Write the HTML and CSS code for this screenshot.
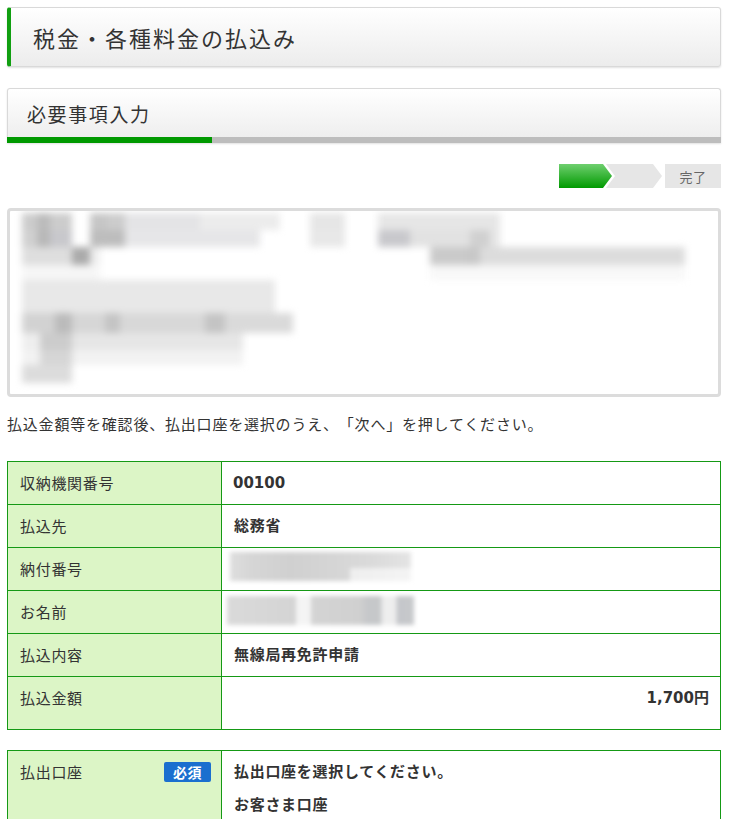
FILE: index.html
```html
<!DOCTYPE html>
<html lang="ja">
<head>
<meta charset="utf-8">
<title>税金・各種料金の払込み</title>
<link rel="stylesheet" href="styles.css">
</head>
<body>
<div class="page">
  <div class="title-box"><h1 class="title">税金・各種料金の払込み</h1></div>

  <div class="sub-box">
    <h2 class="sub-title">必要事項入力</h2>
    <div class="progress"><div class="progress-fill"></div></div>
  </div>

  <div class="steps">
    <svg class="steps-svg" width="106" height="24" viewBox="0 0 106 24">
      <defs>
        <linearGradient id="g" x1="0" y1="0" x2="0" y2="1">
          <stop offset="0" stop-color="#6fcf6f"/>
          <stop offset="1" stop-color="#009a00"/>
        </linearGradient>
      </defs>
      <polygon points="0,0 44,0 53,12 44,24 0,24" fill="url(#g)"/>
      <polygon points="47,0 94,0 103,12 94,24 47,24 56,12" fill="#e6e6e6"/>
    </svg>
    <div class="step-done">完了</div>
  </div>

  <div class="notice">
    <div class="blur">
      <div class="brow h17"><span class="s" style="width:15px;background:#ccc"></span><span class="s" style="width:13px;background:#bbb"></span><span class="s" style="width:22px;background:#ccc"></span><span class="s" style="width:18px"></span><span class="s" style="width:17px;background:#c6c6c6"></span><span class="s" style="width:18px;background:#ccc"></span><span class="s" style="width:75px;background:#e4e4e6"></span><span class="s" style="width:80px;background:#ececec"></span><span class="s" style="width:30px"></span><span class="s" style="width:35px;background:#e6e6e6"></span><span class="s" style="width:33px"></span><span class="s" style="width:122px;background:#e6e6e6"></span></div>
      <div class="brow h17"><span class="s" style="width:15px;background:#d0d0d0"></span><span class="s" style="width:13px;background:#b8b8b8"></span><span class="s" style="width:22px;background:#c8c8cc"></span><span class="s" style="width:18px"></span><span class="s" style="width:35px;background:#bdbdbd"></span><span class="s" style="width:135px;background:#e6e6e8"></span><span class="s" style="width:50px"></span><span class="s" style="width:35px;background:#e8e8e8"></span><span class="s" style="width:33px"></span><span class="s" style="width:32px;background:#c8c8cc"></span><span class="s" style="width:60px;background:#e2e2e2"></span><span class="s" style="width:20px;background:#d0d0d0"></span><span class="s" style="width:10px;background:#e6e6e6"></span></div>
      <div class="brow h18"><span class="s" style="width:50px;background:#dedede"></span><span class="s" style="width:18px;background:#aaa"></span><span class="s" style="width:10px;background:#eee"></span><span class="s" style="width:330px"></span><span class="s" style="width:35px;background:#cacaca"></span><span class="s" style="width:15px;background:#c8c8c8"></span><span class="s" style="width:205px;background:#dcdcdc"></span></div>
      <div class="brow h15"><span class="s" style="width:78px;background:#f6f6f6"></span><span class="s" style="width:330px"></span><span class="s" style="width:255px;background:#f8f8f8"></span></div>
      <div class="brow h33"><span class="s" style="width:253px;background:#e8e8e8"></span></div>
      <div class="brow h20"><span class="s" style="width:33px;background:#d2d2d2"></span><span class="s" style="width:17px;background:#bbb"></span><span class="s" style="width:33px;background:#d6d6d6"></span><span class="s" style="width:15px;background:#c4c4c4"></span><span class="s" style="width:85px;background:#d8d8d8"></span><span class="s" style="width:20px;background:#c4c4c4"></span><span class="s" style="width:68px;background:#dadada"></span></div>
      <div class="brow h17"><span class="s" style="width:18px;background:#eee"></span><span class="s" style="width:32px;background:#ccc"></span><span class="s" style="width:171px;background:#e6e6e6"></span></div>
      <div class="brow h15"><span class="s" style="width:18px;background:#f2f2f2"></span><span class="s" style="width:32px;background:#d6d6d6"></span><span class="s" style="width:171px;background:#f2f2f2"></span></div>
      <div class="brow h18"><span class="s" style="width:50px;background:#dcdcdc"></span></div>
    </div>
  </div>

  <p class="lead">払込金額等を確認後、払出口座を選択のうえ、「次へ」を押してください。</p>

  <table class="info">
    <tr><th>収納機関番号</th><td class="num">00100</td></tr>
    <tr><th>払込先</th><td>総務省</td></tr>
    <tr><th>納付番号</th><td><div class="mask mask-no"></div></td></tr>
    <tr><th>お名前</th><td><div class="mask mask-name"></div></td></tr>
    <tr><th>払込内容</th><td>無線局再免許申請</td></tr>
    <tr class="last"><th>払込金額</th><td class="amount">1,700円</td></tr>
  </table>

  <table class="info acct">
    <tr>
      <th><div class="lab-row"><span>払出口座</span><span class="badge">必須</span></div></th>
      <td><p class="line">払出口座を選択してください。</p><p class="line second">お客さま口座</p></td>
    </tr>
  </table>
</div>
</body>
</html>
```
FILE: styles.css
```css
* { box-sizing: border-box; }
html, body { margin: 0; padding: 0; background: #fff; }
body {
  font-family: "DejaVu Sans", "Noto Sans CJK JP", sans-serif;
  color: #333;
  overflow: hidden;
  text-spacing-trim: space-all;
}
.page {
  width: 714px;
  margin-left: 7px;
  padding-top: 7px;
}
.title-box {
  height: 60px;
  border: 1px solid #d9d9d9;
  border-left: 4px solid #119f11;
  border-radius: 3px;
  background: linear-gradient(#ffffff, #ececec);
  box-shadow: 0 1px 2px rgba(0,0,0,0.12);
  display: flex;
  align-items: center;
  padding-left: 22px;
}
.title {
  margin: 0;
  font-family: "Noto Sans CJK JP", sans-serif;
  font-weight: 400;
  font-size: 22px;
  letter-spacing: 2px;
  color: #333;
}
.sub-box {
  margin-top: 21px;
  height: 55px;
  border: 1px solid #d9d9d9;
  border-bottom: none;
  border-radius: 3px 3px 0 0;
  background: linear-gradient(#ffffff, #ececec);
  box-shadow: 0 1px 2px rgba(0,0,0,0.12);
  display: flex;
  flex-direction: column;
}
.sub-title {
  flex: 1;
  margin: 0;
  display: flex;
  align-items: center;
  padding-left: 19px;
  font-family: "Noto Sans CJK JP", sans-serif;
  font-weight: 400;
  font-size: 19px;
  letter-spacing: 1.6px;
  color: #333;
}
.progress {
  height: 6px;
  background: #bdbdbd;
  margin: 0 -1px;
}
.progress-fill {
  width: 205px;
  height: 100%;
  background: #009900;
}
.steps {
  margin-top: 21px;
  display: flex;
  justify-content: flex-end;
  height: 24px;
}
.steps-svg { display: block; }
.step-done {
  width: 56px;
  height: 24px;
  background: #e6e6e6;
  color: #666;
  font-family: "Noto Sans CJK JP", sans-serif;
  font-size: 13px;
  letter-spacing: 0.5px;
  display: flex;
  align-items: center;
  justify-content: center;
}
.notice {
  margin-top: 20px;
  height: 189px;
  border: 3px solid #dcdcdc;
  border-radius: 4px;
  padding: 2px 0 0 12px;
  overflow: hidden;
}
.blur {
  filter: blur(3.5px);
}
.brow { display: flex; }
.brow .s { display: block; height: 100%; flex: none; }
.h15 { height: 15px; }
.h17 { height: 17px; }
.h18 { height: 18px; }
.h20 { height: 20px; }
.h33 { height: 33px; }
.lead {
  margin: 15px 0 0;
  font-family: "Noto Sans CJK JP", sans-serif;
  font-size: 15px;
  letter-spacing: 0.8px;
  line-height: 24px;
}
.info {
  margin-top: 25px;
  width: 714px;
  border-collapse: collapse;
  table-layout: fixed;
}
.info th, .info td {
  border: 1px solid #159915;
  padding: 10px 12px;
  line-height: 22px;
  vertical-align: top;
  text-align: left;
  font-size: 15px;
  letter-spacing: 0.7px;
}
.info th {
  width: 214px;
  background: #dcf5c6;
  font-weight: 400;
  font-family: "Noto Sans CJK JP", sans-serif;
}
.info td {
  font-weight: 700;
  font-family: "DejaVu Sans", "Noto Sans CJK JP", sans-serif;
}
.info td.num { letter-spacing: 0; padding-left: 11px; }
.info tr.last td, .info tr.last th { padding-bottom: 20px; }
.info td.amount { text-align: right; letter-spacing: 0; padding-right: 11px; }
.mask {
  height: 29px;
  filter: blur(2px);
}
.mask-no {
  width: 181px;
  margin: -6px 0 -1px -4px;
  background:
    linear-gradient(to right, transparent 0, transparent 120px, rgba(255,255,255,0.6) 120px),
    linear-gradient(to right, #dedede 0, #d6d6d6 20px, #d0d0d0 60px, #d6d6d6 110px, #dadada 140px, #e4e4e4 181px);
  background-size: 100% 45%, 100% 100%;
  background-position: 0 100%, 0 0;
  background-repeat: no-repeat;
}
.mask-name {
  width: 187px;
  margin: -5px 0 -2px -7px;
  background: linear-gradient(to right, #dadada 0, #d4d4d4 68px, #f4f4f4 70px, #f4f4f4 83px, #d4d4d4 85px, #d0d0d0 133px, #c6c8ca 140px, #c6c8ca 153px, #eeeeee 156px, #eeeeee 168px, #c4c6ca 171px, #c8cacc 187px);
}
.acct { margin-top: 20px; }
.lab-row {
  display: flex;
  justify-content: space-between;
  align-items: center;
  margin-right: -2px;
}
.badge {
  background: #1a6fcf;
  color: #fff;
  font-weight: 700;
  font-size: 14px;
  letter-spacing: 0.5px;
  line-height: 20px;
  height: 20px;
  padding: 0 9px;
  border-radius: 2px;
}
.line { margin: 0; }
.line.second { margin-top: 11px; }
```
